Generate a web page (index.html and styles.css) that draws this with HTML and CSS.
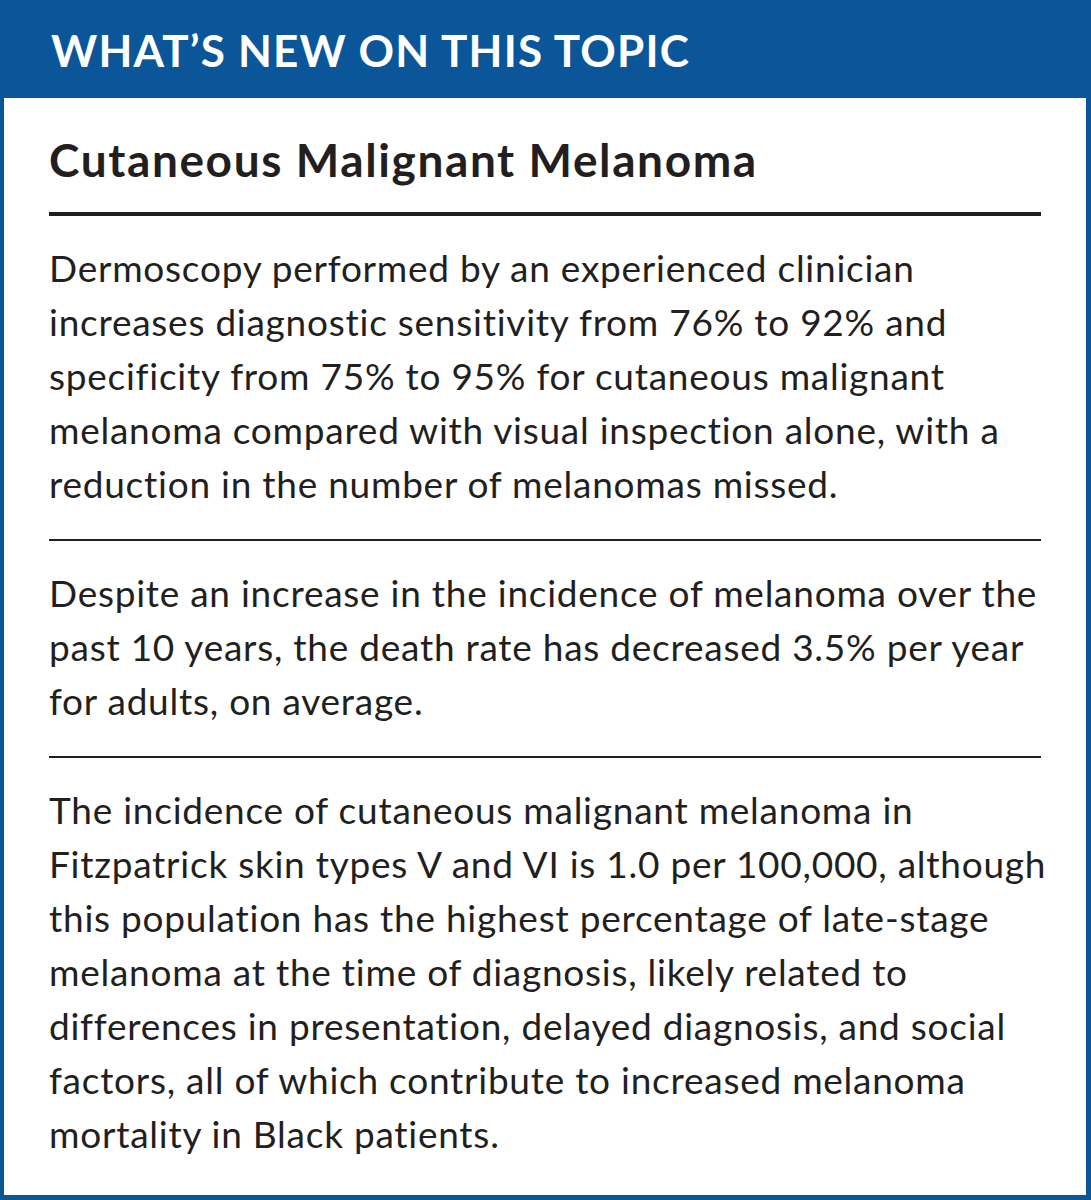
FILE: index.html
```html
<!DOCTYPE html>
<html lang="en">
<head>
<meta charset="utf-8">
<title>What's New on This Topic</title>
<link rel="stylesheet" href="styles.css">
</head>
<body>
<div class="box">
  <div class="header">WHAT’S NEW ON THIS TOPIC</div>
  <div class="content">
    <h1 class="title">Cutaneous Malignant Melanoma</h1>
    <p class="item">Dermoscopy performed by an experienced clinician<br>increases diagnostic sensitivity from 76% to 92% and<br>specificity from 75% to 95% for cutaneous malignant<br>melanoma compared with visual inspection alone, with a<br>reduction in the number of melanomas missed.</p>
    <p class="item">Despite an increase in the incidence of melanoma over the<br>past 10 years, the death rate has decreased 3.5% per year<br>for adults, on average.</p>
    <p class="item last">The incidence of cutaneous malignant melanoma in<br>Fitzpatrick skin types V and VI is 1.0 per 100,000, although<br>this population has the highest percentage of late-stage<br>melanoma at the time of diagnosis, likely related to<br>differences in presentation, delayed diagnosis, and social<br>factors, all of which contribute to increased melanoma<br>mortality in Black patients.</p>
  </div>
</div>
</body>
</html>
```

FILE: styles.css
```css
html, body {
  margin: 0;
  padding: 0;
  background: #ffffff;
}

.box {
  box-sizing: border-box;
  width: 1091px;
  height: 1200px;
  border-style: solid;
  border-color: #0a5699;
  border-width: 4px 5px 5px 4px;
  background: #ffffff;
  font-family: Lato, "Open Sans", sans-serif;
  color: #231f20;
}

.header {
  background: #0a5699;
  color: #ffffff;
  font-weight: 700;
  font-size: 44px;
  line-height: 1.2;
  letter-spacing: 1.2px;
  padding: 20px 0 21px 47px;
  white-space: nowrap;
}

.content {
  padding: 0 45px;
}

.title {
  margin: 0;
  padding: 34px 0 25px 0;
  font-size: 46px;
  font-weight: 700;
  line-height: 1.2;
  letter-spacing: 1.6px;
  border-bottom: 4px solid #231f20;
  white-space: nowrap;
}

.item {
  margin: 0;
  padding: 25px 0 28px 0;
  font-size: 37px;
  line-height: 54px;
  letter-spacing: 0.75px;
  border-bottom: 2px solid #231f20;
  white-space: nowrap;
}

.item.last {
  border-bottom: none;
}
```
